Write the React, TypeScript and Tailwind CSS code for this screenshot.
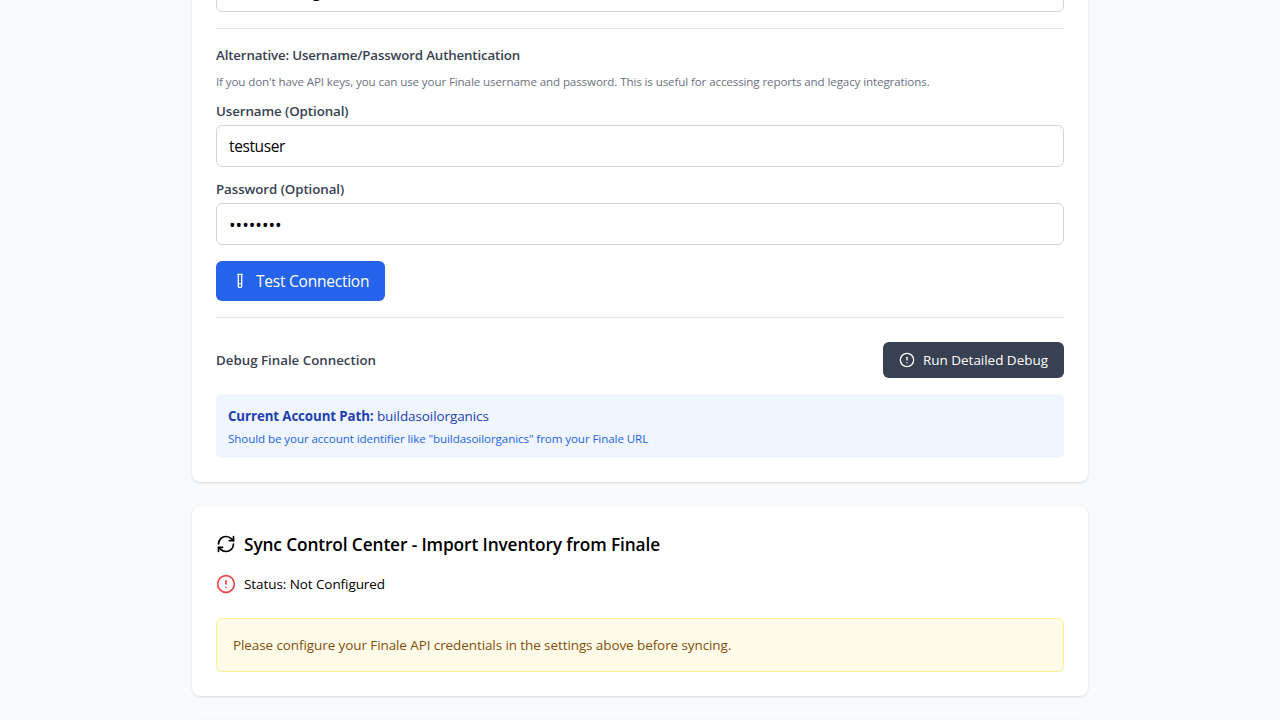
import { CircleAlert, RefreshCw, TestTube } from "lucide-react";

const inputClass =
  "block h-[42px] w-full rounded-md border border-[#d1d5db] bg-white px-3 text-black outline-none";

export default function App() {
  return (
    <div className="h-screen overflow-hidden bg-[#f9fafb] font-['Open_Sans',sans-serif] text-black">
      <main className="mx-auto flex w-[896px] flex-col gap-6">
        <section className="-mt-[30px] rounded-lg bg-white px-6 pb-6 shadow-[0_1px_3px_0_rgba(0,0,0,0.1),0_1px_2px_-1px_rgba(0,0,0,0.1)]">
          <input
            className={`${inputClass} text-[15.2px]`}
            defaultValue="buildasoilorganics"
          />

          <div className="mt-4 border-t border-[#e5e7eb] pt-4">
            <h4 className="text-[13.3px] leading-5 font-semibold tracking-[-0.15px] text-[#374151]">
              Alternative: Username/Password Authentication
            </h4>
            <p className="pt-[9px] text-[11.6px] leading-4 tracking-[-0.115px] whitespace-nowrap text-[#6b7280]">
              If you don't have API keys, you can use your Finale username and
              password. This is useful for accessing reports and legacy
              integrations.
            </p>
            <div className="mt-[11px]">
              <label className="mb-1 block text-[13.3px] leading-5 font-semibold tracking-[-0.07px] text-[#374151]">
                Username (Optional)
              </label>
              <input
                className={`${inputClass} text-[15.5px] tracking-[-0.38px]`}
                defaultValue="testuser"
              />
            </div>
            <div className="mt-3">
              <label className="mb-1 block text-[13.3px] leading-5 font-semibold tracking-[-0.07px] text-[#374151]">
                Password (Optional)
              </label>
              <input
                type="password"
                className={`${inputClass} pt-0.5 text-[17.5px]`}
                defaultValue="password"
              />
            </div>
          </div>

          <button className="mt-4 flex h-10 w-[169px] items-center gap-2 rounded-md bg-[#2563eb] px-4 text-[15.5px] leading-6 tracking-[-0.23px] whitespace-nowrap text-white">
            <TestTube size={16} className="shrink-0" />
            Test Connection
          </button>

          <div className="mt-4 border-t border-[#e5e7eb] pt-6">
            <div className="flex items-center justify-between">
              <h4 className="text-[13.3px] leading-5 font-semibold text-[#374151]">
                Debug Finale Connection
              </h4>
              <button className="flex h-9 w-[181px] items-center gap-2 rounded-md bg-[#374151] px-4 text-[13.5px] leading-5 tracking-[-0.03px] whitespace-nowrap text-white">
                <CircleAlert size={16} className="shrink-0" />
                Run Detailed Debug
              </button>
            </div>
            <div className="mt-4 rounded-md bg-[#eff6ff] p-3">
              <p className="text-[13.5px] leading-5 tracking-[-0.09px] text-[#1e40af]">
                <strong className="text-[13.3px] font-bold tracking-[-0.1px]">
                  Current Account Path:
                </strong>{" "}
                buildasoilorganics
              </p>
              <p className="-mb-px pt-[5px] text-[11.6px] leading-4 tracking-[-0.09px] text-[#2563eb]">
                Should be your account identifier like "buildasoilorganics" from
                your Finale URL
              </p>
            </div>
          </div>
        </section>

        <section className="rounded-lg bg-white p-6 shadow-[0_1px_3px_0_rgba(0,0,0,0.1),0_1px_2px_-1px_rgba(0,0,0,0.1)]">
          <h3 className="flex h-7 items-center gap-2 text-[17.3px] leading-7 font-semibold tracking-[-0.12px]">
            <RefreshCw size={20} />
            <span className="pt-0.5">
              Sync Control Center - Import Inventory from Finale
            </span>
          </h3>
          <div className="mt-4 flex items-center gap-2">
            <CircleAlert size={20} className="text-[#ef4444]" />
            <span className="text-[13.5px] leading-5 tracking-[-0.08px]">
              Status: Not Configured
            </span>
          </div>
          <div className="mt-6 rounded-md border border-[#fef08a] bg-[#fefce8] p-4">
            <p className="text-[13.5px] leading-5 tracking-[-0.095px] text-[#854d0e]">
              Please configure your Finale API credentials in the settings above
              before syncing.
            </p>
          </div>
        </section>

        <section className="h-24 rounded-lg bg-white shadow-[0_1px_3px_0_rgba(0,0,0,0.1),0_1px_2px_-1px_rgba(0,0,0,0.1)]" />
      </main>
    </div>
  );
}
